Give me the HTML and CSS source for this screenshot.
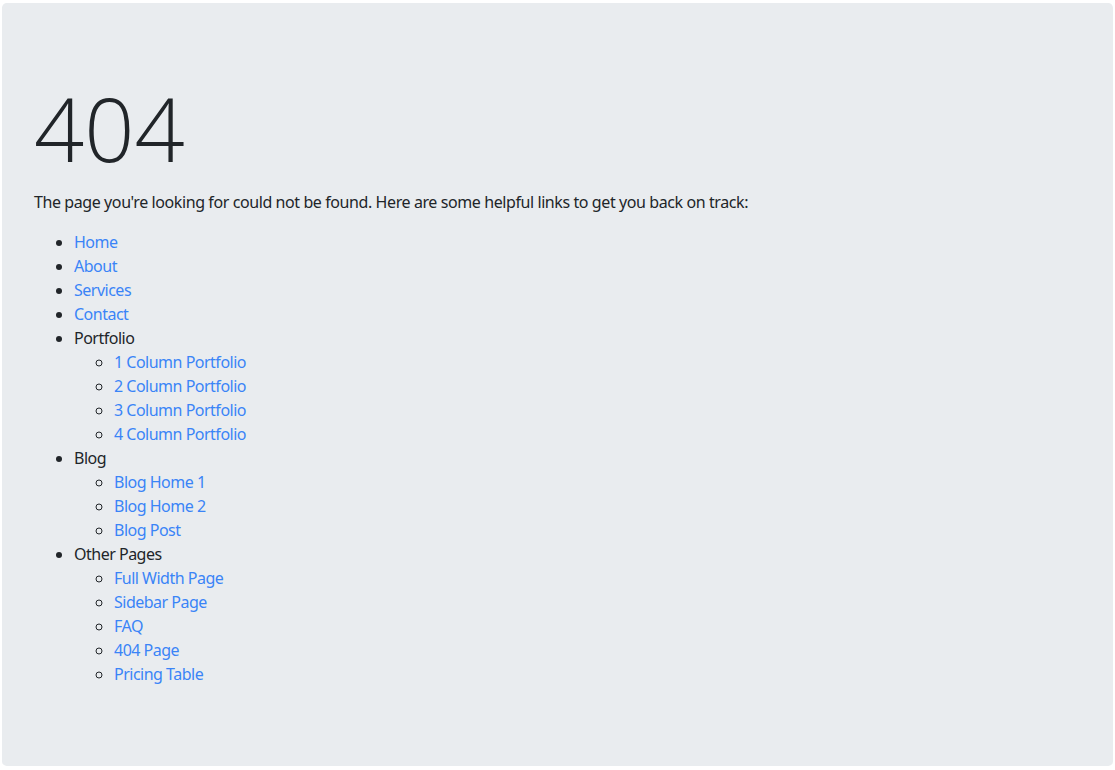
FILE: index.html
```html
<!DOCTYPE html>
<html lang="en">
<head>
<meta charset="utf-8">
<title>404</title>
<link rel="stylesheet" href="styles.css">
</head>
<body>
<div class="jumbotron">
  <h1 class="display-1">404</h1>
  <p class="lead-text">The page you're looking for could not be found. Here are some helpful links to get you back on track:</p>
  <ul class="links">
    <li><a href="#">Home</a></li>
    <li><a href="#">About</a></li>
    <li><a href="#">Services</a></li>
    <li><a href="#">Contact</a></li>
    <li>Portfolio
      <ul class="sub">
        <li><a href="#">1 Column Portfolio</a></li>
        <li><a href="#">2 Column Portfolio</a></li>
        <li><a href="#">3 Column Portfolio</a></li>
        <li><a href="#">4 Column Portfolio</a></li>
      </ul>
    </li>
    <li>Blog
      <ul class="sub">
        <li><a href="#">Blog Home 1</a></li>
        <li><a href="#">Blog Home 2</a></li>
        <li><a href="#">Blog Post</a></li>
      </ul>
    </li>
    <li>Other Pages
      <ul class="sub">
        <li><a href="#">Full Width Page</a></li>
        <li><a href="#">Sidebar Page</a></li>
        <li><a href="#">FAQ</a></li>
        <li><a href="#">404 Page</a></li>
        <li><a href="#">Pricing Table</a></li>
      </ul>
    </li>
  </ul>
</div>
</body>
</html>
```
FILE: styles.css
```css
html, body {
  margin: 0;
  padding: 0;
  background: #fff;
}
body {
  font-family: "Noto Sans", "Open Sans", sans-serif;
  font-size: 16px;
  line-height: 24px;
  color: #212529;
  padding: 3px 2px 4px 2px;
}
.jumbotron {
  background: #e9ecef;
  border-radius: 4.8px;
  padding: 64px 32px;
}
.display-1 {
  font-family: "Open Sans", "Noto Sans", sans-serif;
  font-size: 88px;
  font-weight: 300;
  line-height: 112px;
  margin: 0 0 6px 0;
  padding-top: 5px;
  letter-spacing: 0;
}
.lead-text {
  margin: 0 0 16px 0;
  letter-spacing: -0.41px;
}
.links {
  margin: 0 0 16px 0;
  padding-left: 40px;
  list-style: disc;
  letter-spacing: -0.5px;
}
.sub {
  margin: 0;
  padding-left: 40px;
  list-style: circle;
}
a {
  color: #3a84f7;
  text-decoration: none;
}
```
